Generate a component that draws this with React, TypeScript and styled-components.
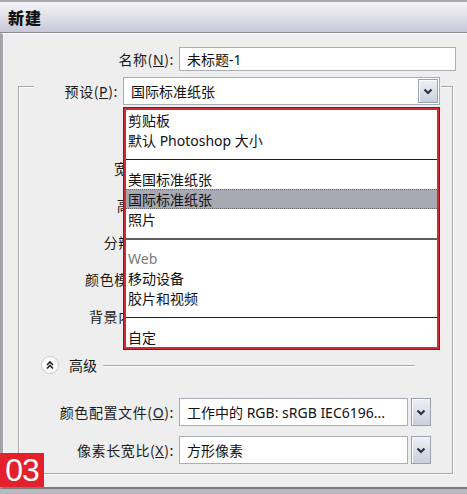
import styled, { createGlobalStyle } from 'styled-components';

const GlobalStyle = createGlobalStyle`
  html, body {
    margin: 0;
    padding: 0;
    background: #eeeeee;
  }
  body {
    font-family: "Noto Sans", "Noto Sans CJK SC", sans-serif;
    color: #111;
  }
`;

const Window = styled.div`
  position: relative;
  width: 467px;
  height: 494px;
  display: flex;
  flex-direction: column;
  overflow: hidden;
  background: #b9b9bd;
`;

const TitleBar = styled.div`
  height: 30px;
  flex-shrink: 0;
  display: flex;
  align-items: center;
  padding-left: 8px;
  border-top: 2px solid #a9a9ad;
  border-bottom: 1px solid #8a8a92;
  background: linear-gradient(#f4f4f8 0%, #e4e5ec 40%, #c6c8d6 100%);
  font-family: "Noto Sans CJK SC", sans-serif;
  font-weight: 900;
  font-size: 16px;
  letter-spacing: 1px;
`;

const Body = styled.div`
  flex: 1;
  display: flex;
  flex-direction: column;
  background: #eeeeee;
  border-left: 3px solid #a3a3a8;
  border-top: 1px solid #ffffff;
  border-bottom: 2px solid #7b7b80;
  margin-bottom: 5px;
  padding-top: 13px;
  box-shadow: inset 1px 0 0 #fafafa;
`;

const FormRow = styled.div<{ $label: number; $top?: number }>`
  display: grid;
  grid-template-columns: ${(p) => p.$label}px auto;
  column-gap: 5px;
  align-items: center;
  margin-top: ${(p) => p.$top ?? 0}px;
`;

const Label = styled.span`
  text-align: right;
  font-family: "Noto Sans CJK SC", sans-serif;
  font-size: 14px;
  line-height: 18px;
  letter-spacing: 0.6px;
  white-space: nowrap;
  color: #1a1a1a;
`;

const Key = styled.span`
  text-decoration: underline;
  font-family: "Noto Sans", sans-serif;
`;

const Field = styled.div<{ $w: number; $h: number }>`
  width: ${(p) => p.$w}px;
  height: ${(p) => p.$h}px;
  box-sizing: border-box;
  display: flex;
  align-items: center;
  background: #ffffff;
  border: 1px solid #a9adb5;
  padding-left: 7px;
  font-family: "Noto Sans", "Noto Sans CJK SC", sans-serif;
  font-size: 14px;
  white-space: nowrap;
  overflow: hidden;
`;

const FieldText = styled.span`
  flex: 1;
`;

const ArrowButton = styled.div<{ $w: number; $h: number }>`
  width: ${(p) => p.$w}px;
  height: ${(p) => p.$h}px;
  box-sizing: border-box;
  flex-shrink: 0;
  display: flex;
  align-items: center;
  justify-content: center;
  border: 1px solid #9aa2b2;
  background: linear-gradient(#eef0f5, #c9cfdb);
  box-shadow: inset 1px 1px 0 #fafbfd;
`;

const SplitSelect = styled.div`
  display: flex;
  gap: 3px;
`;

const GroupBox = styled.div`
  margin: 15px 0 0 15px;
  width: 435px;
  height: 388px;
  box-sizing: border-box;
  border: 1px solid #a6a6a6;
  box-shadow: inset 1px 1px 0 #ffffff, 1px 1px 0 #ffffff;
  display: flex;
  flex-direction: column;
`;

const PresetRow = styled.div`
  margin: -10px 0 0 15px;
  width: 407px;
  background: #eeeeee;
  display: grid;
  grid-template-columns: 84px auto;
  column-gap: 5px;
  align-items: center;
`;

const HiddenRows = styled.div`
  margin-top: 8px;
  display: flex;
  flex-direction: column;
`;

const HiddenRow = styled.div`
  height: 37px;
  width: 153px;
  display: flex;
  align-items: center;
  justify-content: flex-end;
`;

const AdvancedRow = styled.div`
  margin: 21px 0 0 22px;
  height: 18px;
  display: flex;
  align-items: center;
`;

const RoundToggle = styled.div`
  width: 18px;
  height: 18px;
  box-sizing: border-box;
  border-radius: 50%;
  border: 1px solid #c9c9c9;
  background: #ffffff;
  display: flex;
  align-items: center;
  justify-content: center;
`;

const AdvancedText = styled.span`
  margin-left: 10px;
  font-family: "Noto Sans CJK SC", sans-serif;
  font-size: 14px;
`;

const Rule = styled.div`
  margin-left: 6px;
  width: 312px;
  height: 1px;
  background: #a8a8a8;
  box-shadow: 0 1px 0 #ffffff;
`;

const Menu = styled.div`
  position: absolute;
  left: 123px;
  top: 107px;
  width: 317px;
  height: 243px;
  box-sizing: border-box;
  border: 1px solid #3a3a3a;
  background: #ffffff;
`;

const MenuList = styled.div`
  height: 100%;
  box-sizing: border-box;
  border: 2px solid #cf2b36;
  display: flex;
  flex-direction: column;
  overflow: hidden;
`;

const MenuItem = styled.div<{ $active?: boolean; $muted?: boolean }>`
  height: 20px;
  flex-shrink: 0;
  box-sizing: border-box;
  display: flex;
  align-items: center;
  padding-left: 2px;
  font-family: "Noto Sans", "Noto Sans CJK SC", sans-serif;
  font-size: 14px;
  white-space: nowrap;
  color: ${(p) => (p.$muted ? '#7a7a7a' : '#111')};
  background: ${(p) => (p.$active ? '#a9a9b3' : 'transparent')};
  border-top: 1px dotted ${(p) => (p.$active ? '#6a6a70' : 'transparent')};
  border-bottom: 1px dotted ${(p) => (p.$active ? '#6a6a70' : 'transparent')};
`;

const MenuSeparator = styled.div<{ $thick?: boolean }>`
  height: 19px;
  flex-shrink: 0;
  display: flex;
  align-items: center;

  &::after {
    content: '';
    flex: 1;
    height: ${(p) => (p.$thick ? 2 : 1)}px;
    background: ${(p) => (p.$thick ? '#5e5e5e' : '#1e1e1e')};
  }
`;

const Badge = styled.div`
  position: absolute;
  left: 0;
  top: 453px;
  width: 44px;
  height: 34px;
  background: #e3202b;
  color: #ffffff;
  display: flex;
  align-items: center;
  justify-content: center;
  font-family: "Liberation Sans", sans-serif;
  font-size: 32px;
  letter-spacing: -1px;
`;

const Chevron = () => (
  <svg width="10" height="7" viewBox="0 0 10 7">
    <path d="M1.5 1.5 L5 5 L8.5 1.5" fill="none" stroke="#2a3346" strokeWidth="2.2" />
  </svg>
);

const DoubleUp = () => (
  <svg width="10" height="10" viewBox="0 0 10 10">
    <path d="M2 5 L5 2 L8 5 M2 8.5 L5 5.5 L8 8.5" fill="none" stroke="#222" strokeWidth="1.6" />
  </svg>
);

const hiddenLabels = [
  ['大小', 'I'],
  ['宽度', 'W'],
  ['高度', 'H'],
  ['分辨率', 'R'],
  ['颜色模式', 'M'],
  ['背景内容', 'C'],
];

type Entry = { text?: string; sep?: 'thin' | 'thick'; active?: boolean; muted?: boolean };

const menuEntries: Entry[] = [
  { text: '剪贴板' },
  { text: '默认 Photoshop 大小' },
  { sep: 'thin' },
  { text: '美国标准纸张' },
  { text: '国际标准纸张', active: true },
  { text: '照片' },
  { sep: 'thick' },
  { text: 'Web', muted: true },
  { text: '移动设备' },
  { text: '胶片和视频' },
  { sep: 'thin' },
  { text: '自定' },
];

export default function App() {
  return (
    <>
      <GlobalStyle />
      <Window>
        <TitleBar>新建</TitleBar>
        <Body>
          <FormRow $label={171}>
            <Label>
              名称(<Key>N</Key>):
            </Label>
            <Field $w={277} $h={24}>
              <FieldText>未标题-1</FieldText>
            </Field>
          </FormRow>

          <GroupBox>
            <PresetRow>
              <Label>
                预设(<Key>P</Key>):
              </Label>
              <Field $w={317} $h={28}>
                <FieldText>国际标准纸张</FieldText>
                <ArrowButton $w={20} $h={24} style={{ marginRight: 1 }}>
                  <Chevron />
                </ArrowButton>
              </Field>
            </PresetRow>

            <HiddenRows>
              {hiddenLabels.map(([name, key]) => (
                <HiddenRow key={key}>
                  <Label>
                    {name}(<Key>{key}</Key>):
                  </Label>
                </HiddenRow>
              ))}
            </HiddenRows>

            <AdvancedRow>
              <RoundToggle>
                <DoubleUp />
              </RoundToggle>
              <AdvancedText>高级</AdvancedText>
              <Rule />
            </AdvancedRow>

            <FormRow $label={155} $top={24}>
              <Label>
                颜色配置文件(<Key>O</Key>):
              </Label>
              <SplitSelect>
                <Field $w={229} $h={28}>
                  <FieldText>工作中的 RGB: sRGB IEC6196...</FieldText>
                </Field>
                <ArrowButton $w={20} $h={28}>
                  <Chevron />
                </ArrowButton>
              </SplitSelect>
            </FormRow>

            <FormRow $label={155} $top={10}>
              <Label>
                像素长宽比(<Key>X</Key>):
              </Label>
              <SplitSelect>
                <Field $w={229} $h={28}>
                  <FieldText>方形像素</FieldText>
                </Field>
                <ArrowButton $w={20} $h={28}>
                  <Chevron />
                </ArrowButton>
              </SplitSelect>
            </FormRow>
          </GroupBox>
        </Body>

        <Menu>
          <MenuList>
            {menuEntries.map((e, i) =>
              e.sep ? (
                <MenuSeparator key={i} $thick={e.sep === 'thick'} />
              ) : (
                <MenuItem key={i} $active={e.active} $muted={e.muted}>
                  {e.text}
                </MenuItem>
              ),
            )}
          </MenuList>
        </Menu>

        <Badge>03</Badge>
      </Window>
    </>
  );
}
